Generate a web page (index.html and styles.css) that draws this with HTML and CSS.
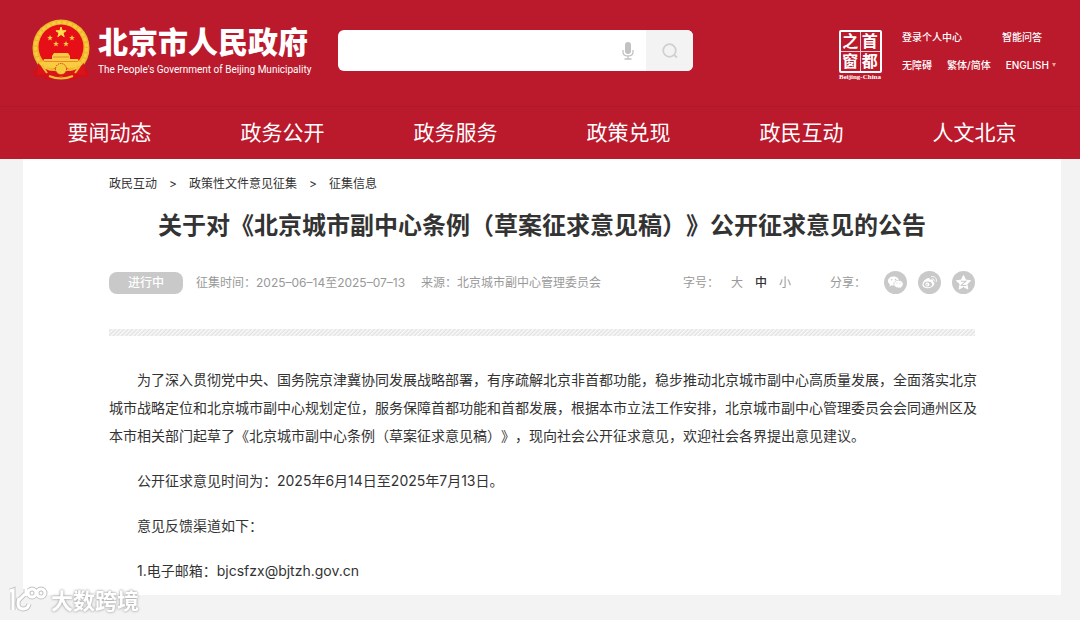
FILE: index.html
```
<!DOCTYPE html>
<html lang="zh-CN">
<head>
<meta charset="utf-8">
<title>北京市人民政府</title>
<link rel="stylesheet" href="styles.css">
</head>
<body>
<header class="header">
  <div class="top">
    <a class="brand" href="#">
      <svg class="emblem" viewBox="0 0 58 62" aria-hidden="true">
        <path d="M7 46 L1 54 L3 58 L12 58 L16 61 L29 59 L42 61 L46 58 L55 58 L57 54 L51 46Z" fill="#d30f17"/>
        <circle cx="29" cy="29" r="28.500" fill="#eeb62b"/>
        <circle cx="29" cy="29" r="25.500" fill="none" stroke="#f7cb3d" stroke-width="3" stroke-dasharray="4 1.500"/>
        <circle cx="29" cy="28" r="22.500" fill="#e60f18"/>
        <path d="M29 8l1.200 3.700h3.900l-3.100 2.300 1.200 3.700-3.200-2.300-3.200 2.300 1.200-3.700-3.100-2.300h3.900z" fill="#ffdf4a" stroke="#ffdf4a"/>
        <g fill="#f9cb40">
          <path id="s" d="M18 16l.8 2h2.100l-1.700 1.300.6 2.100-1.800-1.200-1.800 1.200.6-2.100-1.700-1.300h2.100z"/>
          <use href="#s" x="22"/><use href="#s" x="6" y="6"/><use href="#s" x="16" y="6"/>
          <path d="M22 34h14l2 3v3h8l1 3H11l1-3h8v-3z"/>
          <path d="M8 43h42q-4 6-13 6H21q-9 0-13-6z"/>
        </g>
        <path d="M21 38h16M12 42.500h34" stroke="#e8752a" stroke-width=".8"/>
        <path d="M6 44q8 9 17 8l6 3 6-3q9 1 17-8l1 12-9-1-6 5-9-3-9 3-6-5-9 1z" fill="#d9141b"/>
        <circle cx="29" cy="50" r="5.500" fill="#f5cb3d" stroke="#d9141b" stroke-dasharray="1 1"/>
        <path d="M17 57q12 5 24 0M10 47l5 7M48 47l-5 7" fill="none" stroke="#f5bd35" stroke-width="2"/>
      </svg>
      <span class="brand-text">
        <span class="brand-name">北京市人民政府</span>
        <span class="brand-en">The People's Government of Beijing Municipality</span>
      </span>
    </a>
    <form class="search">
      <input class="search-input" type="text" aria-label="搜索">
      <button class="mic" type="button" aria-label="语音输入">
        <svg width="12" height="18" viewBox="0 0 12 18"><rect x="3" y="0" width="6" height="12" rx="3" fill="#c2c2c2"/><path d="M1 8v2q0 4 5 4t5-4V8M6 14v3M2.500 17h7" fill="none" stroke="#c2c2c2" stroke-width="1.300"/></svg>
      </button>
      <button class="search-button" type="submit" aria-label="搜索">
        <svg width="16" height="16" viewBox="0 0 16 16"><circle cx="7.500" cy="7.500" r="6.300" fill="none" stroke="#d0d0d0" stroke-width="1.800"/><path d="M11.500 11.500l3.500 3" stroke="#d0d0d0" stroke-width="2"/></svg>
      </button>
    </form>
    <a class="window" href="#">
      <span class="seal"><span>之</span><span>首</span><span>窗</span><span>都</span></span>
      <span class="seal-en">Beijing-China</span>
    </a>
    <div class="tools">
      <div class="tools-row tools-first"><a href="#">登录个人中心</a><a href="#">智能问答</a></div>
      <div class="tools-row"><a href="#">无障碍</a><a href="#">繁体/简体</a><a class="english" href="#">ENGLISH<span class="caret"></span></a></div>
    </div>
  </div>
  <nav class="nav">
    <a href="#">要闻动态</a><a href="#">政务公开</a><a href="#">政务服务</a><a href="#">政策兑现</a><a href="#">政民互动</a><a href="#">人文北京</a>
  </nav>
</header>
<main class="page">
  <nav class="crumbs"><a href="#">政民互动</a><span>&gt;</span><a href="#">政策性文件意见征集</a><span>&gt;</span><a href="#">征集信息</a></nav>
  <h1 class="title">关于对《北京城市副中心条例&#xFF08;草案征求意见稿&#xFF09;》公开征求意见的公告</h1>
  <div class="meta">
    <span class="status">进行中</span>
    <span class="period">征集时间&#xFF1A;2025–06–14至2025–07–13</span>
    <span class="source">来源&#xFF1A;北京城市副中心管理委员会</span>
    <div class="sizes"><span class="sizes-label">字号&#xFF1A;</span><button type="button">大</button><button type="button" class="current">中</button><button type="button">小</button></div>
    <div class="share">
      <span class="share-label">分享&#xFF1A;</span>
      <a href="#" aria-label="微信"><svg viewBox="0 0 23 23"><circle cx="11.500" cy="11.500" r="11.500" fill="#c9c9c9"/><path d="M9.500 5.500c-3.200 0-5.500 2-5.500 4.500 0 1.500.8 2.700 2 3.500l-.5 2 2.300-1.200c.6.200 1.200.2 1.700.2 3.200 0 5.500-2 5.500-4.500s-2.300-4.500-5.500-4.500z" fill="#fff"/><path d="M14.500 9.300c-2.700 0-4.700 1.700-4.700 3.800s2 3.900 4.700 3.900c.5 0 1-.1 1.400-.2l1.900 1-.4-1.700c1.100-.7 1.800-1.800 1.800-3 0-2.100-2-3.800-4.700-3.800z" fill="#fff" stroke="#c9c9c9" stroke-width=".7"/><g fill="#c9c9c9"><circle cx="7.700" cy="8.800" r=".8"/><circle cx="11.500" cy="8.500" r=".8"/><circle cx="13" cy="12" r=".6"/><circle cx="16" cy="12" r=".6"/></g></svg></a>
      <a href="#" aria-label="微博"><svg viewBox="0 0 23 23"><circle cx="11.500" cy="11.500" r="11.500" fill="#c9c9c9"/><path d="M9.500 7.300c1.500-.7 2.700-.1 2.300 1.600 2.200-.8 3.700 0 3 1.800 1.600.6 1.900 1.700 1.300 3-1.100 2.400-4.200 3.700-7.100 3.500-3-.2-4.900-1.700-4.600-4 .2-2.300 2.500-4.800 5.100-5.900z" fill="#fff"/><ellipse cx="9.900" cy="13.300" rx="4.200" ry="2.900" fill="#c9c9c9"/><circle cx="9.400" cy="13.500" r="2" fill="#fff"/><circle cx="9" cy="13.800" r=".8" fill="#c9c9c9"/><path d="M13.500 5.600c3.400-.6 5.700 1.900 4.800 5M14 7.900c1.700-.2 2.500.8 2.200 2.200" fill="none" stroke="#fff" stroke-linecap="round"/></svg></a>
      <a href="#" aria-label="QQ空间"><svg viewBox="0 0 23 23"><circle cx="11.500" cy="11.500" r="11.500" fill="#c9c9c9"/><path d="M11.500 4.500l2.100 4.600 5 .6-3.700 3.400 1 5-4.400-2.500-4.400 2.500 1-5-3.700-3.400 5-.6z" fill="#fff" stroke="#fff" stroke-linejoin="round"/><path d="M8.800 10.300h5l-4.500 3.900q2.800.6 5.200 0" fill="none" stroke="#c9c9c9" stroke-width="1.100"/></svg></a>
    </div>
  </div>
  <div class="stripe"></div>
  <article class="article">
    <p>为了深入贯彻党中央、国务院京津冀协同发展战略部署&#xFF0C;有序疏解北京非首都功能&#xFF0C;稳步推动北京城市副中心高质量发展&#xFF0C;全面落实北京城市战略定位和北京城市副中心规划定位&#xFF0C;服务保障首都功能和首都发展&#xFF0C;根据本市立法工作安排&#xFF0C;北京城市副中心管理委员会会同通州区及本市相关部门起草了《北京城市副中心条例&#xFF08;草案征求意见稿&#xFF09;》&#xFF0C;现向社会公开征求意见&#xFF0C;欢迎社会各界提出意见建议。</p>
    <p>公开征求意见时间为&#xFF1A;2025年6月14日至2025年7月13日。</p>
    <p>意见反馈渠道如下&#xFF1A;</p>
    <p>1.电子邮箱&#xFF1A;bjcsfzx@bjtzh.gov.cn</p>
  </article>
</main>
<div class="watermark">
  <svg width="40" height="28" viewBox="0 0 40 28" fill="none" aria-hidden="true"><g stroke="#c4c4c4" stroke-width="5"><path d="M2 5l3-1v20M17 8l-7 7M11 12q-3 11 4 11 5 0 6-5M18 3v7"/><circle cx="24" cy="7" r="4"/><circle cx="33" cy="7" r="4"/></g><g stroke="#fff" stroke-width="3"><path d="M2 5l3-1v20M17 8l-7 7M11 12q-3 11 4 11 5 0 6-5M18 3v7"/><circle cx="24" cy="7" r="4"/><circle cx="33" cy="7" r="4"/></g></svg>
  <span>大数跨境</span>
</div>
</body>
</html>
```
FILE: styles.css
```
* { box-sizing: border-box; }
body {
  margin: 0;
  background: #f3f3f3;
  color: #333;
  font: 12px/20px Inter, "Noto Sans CJK SC", sans-serif;
  text-spacing-trim: space-all;
}
a { color: inherit; text-decoration: none; }
button { padding: 0; border: 0; background: none; font: inherit; color: inherit; }
svg { display: block; }

.header { background: #bb1a2d; color: #fff; }
.top {
  display: flex;
  align-items: flex-start;
  height: 107px;
  padding: 0 24px 0 32px;
  border-bottom: 1px solid #ae192a;
}
.brand { display: flex; width: 306px; flex: none; }
.emblem { flex: none; width: 58px; height: 62px; margin: 19px 8px 0 0; }
.brand-text { display: flex; flex-direction: column; padding-top: 24px; white-space: nowrap; }
.brand-name { font-size: 30px; line-height: 36px; font-weight: 900; }
.brand-en { font: 10px/16px Roboto, sans-serif; margin-top: 2px; }

.search {
  display: flex;
  width: 355px;
  height: 41px;
  margin-top: 30px;
  background: #fff;
  border-radius: 6px;
  overflow: hidden;
}
.search-input { flex: 1; min-width: 0; border: 0; padding: 0 12px; background: none; font: inherit; outline: 0; }
.mic { width: 37px; display: grid; place-items: center; }
.search-button { width: 47px; display: grid; place-items: center; background: #f3f3f3; }

.window { margin: 30px 0 0 auto; width: 48px; display: flex; flex-direction: column; align-items: center; }
.seal {
  display: grid;
  grid-template-columns: 1fr 1fr;
  width: 43px;
  height: 43px;
  border: 2px solid #fff;
  border-radius: 2px;
  background: linear-gradient(#f2c9ce, #f2c9ce) center / 1px 100% no-repeat, linear-gradient(#f2c9ce, #f2c9ce) center / 100% 1px no-repeat;
  font-size: 16px;
  line-height: 19px;
  font-weight: 700;
  text-align: center;
}
.seal-en { font: bold 7px/8px "Liberation Serif", serif; white-space: nowrap; }

.tools { width: 154px; margin: 27px 0 0 18px; font-size: 10px; font-weight: 500; white-space: nowrap; }
.tools-row { display: flex; justify-content: space-between; }
.tools-first { padding-right: 14px; margin-bottom: 8px; }
.english { display: flex; align-items: center; gap: 3px; }
.caret { border: 2px solid transparent; border-top: 4px solid #eba58a; border-bottom: 0; }

.nav {
  display: grid;
  grid-template-columns: repeat(6, 1fr);
  margin: 0 19px 0 23px;
  text-align: center;
  font-size: 21px;
  line-height: 52px;
}

.page { margin: 0 19px 0 23px; padding: 15px 86px 10px; background: #fff; }
.crumbs { display: flex; gap: 12px; }
.title { margin: 15px 0 0; text-align: center; font-size: 24px; line-height: 34px; font-weight: 700; white-space: nowrap; }
.meta { display: flex; align-items: center; margin-top: 28px; height: 23px; color: #999; white-space: nowrap; }
.status { width: 74px; line-height: 22px; border-radius: 8px; background: #c9c9c9; color: #fff; text-align: center; font-weight: 500; }
.period { margin-left: 13px; }
.source { margin-left: 16px; }
.sizes { display: flex; gap: 12px; margin-left: auto; }
.sizes-label { width: 36px; }
.current { color: #333; font-weight: 500; }
.share { display: flex; align-items: center; gap: 11px; margin-left: 39px; }
.share-label { width: 43px; }
.share svg { width: 23px; height: 23px; }
.stripe { height: 7px; margin-top: 35px; background: repeating-linear-gradient(135deg, #fafafa 0, #e2e2e2 2px, #fafafa 3px); }
.article { margin: 30px -4px 0 0; font-size: 14px; line-height: 28px; }
.article p { margin: 0 0 17px; text-indent: 2em; }
.article p:last-child { margin-bottom: 0; }

.watermark {
  position: fixed;
  left: 8px;
  bottom: 4px;
  display: flex;
  gap: 3px;
  color: #fff;
  font-size: 22px;
  line-height: 30px;
  font-weight: 700;
  text-shadow: 0 0 2px #aaa, 0 0 3px #aaa;
}
```
